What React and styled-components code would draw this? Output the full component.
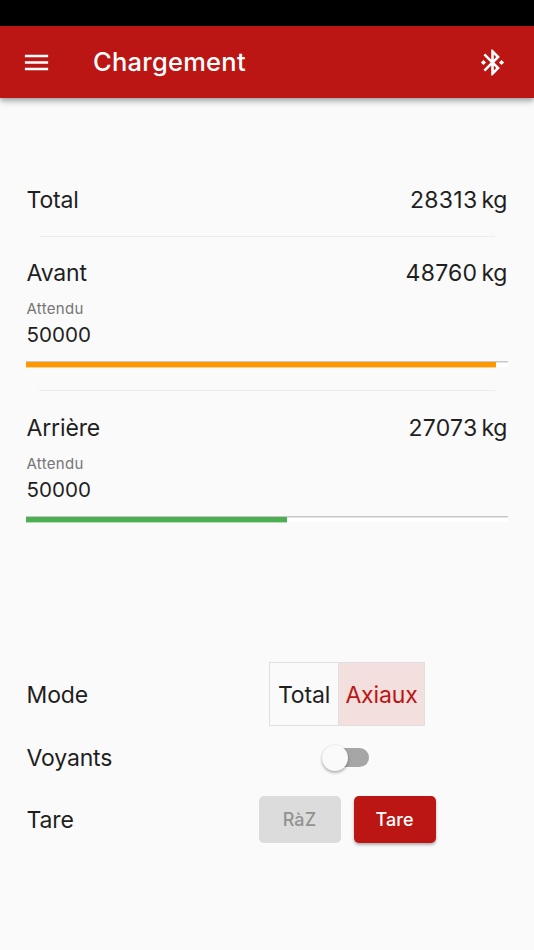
import React, { Component } from "react"
import styled, { createGlobalStyle, css } from "styled-components"

const GlobalStyle = createGlobalStyle`
  * {
    box-sizing: border-box;
  }

  body {
    margin: 0;
    background: #fafafa;
    color: #1f1f1f;
    font-family: Inter, Roboto, "Liberation Sans", sans-serif;
  }

  button {
    margin: 0;
    padding: 0;
    border: none;
    background: none;
    color: inherit;
    font-family: inherit;
  }
`

const Screen = styled.div`
  display: flex;
  flex-direction: column;
  width: 534px;
  height: 950px;
  overflow: hidden;
`

const StatusBar = styled.div`
  flex: none;
  height: 26px;
  background: #000;
`

const AppBar = styled.header`
  flex: none;
  display: flex;
  align-items: center;
  height: 72px;
  padding: 0 26px 0 21px;
  background: #bb1614;
  color: #fff;
  box-shadow: 0 2px 5px rgba(0, 0, 0, 0.32), 0 5px 7px rgba(0, 0, 0, 0.1);
`

const IconButton = styled.button`
  display: flex;
  width: 31px;
  height: 31px;
`

const Icon = styled.svg`
  width: 31px;
  height: 31px;
  fill: currentColor;
`

const Title = styled.h1`
  flex: 1;
  margin: 0 0 0 41px;
  font-size: 25.5px;
  font-weight: 500;
  line-height: 32px;
  letter-spacing: 0.25px;
`

const Main = styled.main`
  display: flex;
  flex-direction: column;
  padding: 65px 26px 0;
`

const Row = styled.div`
  display: flex;
  align-items: center;
  justify-content: space-between;
  height: ${props => props.$height}px;
`

const Label = styled.span`
  padding-left: 0.5px;
  font-size: 23px;
  line-height: 28px;
  letter-spacing: -0.15px;
`

const Weight = styled.span`
  display: flex;
  gap: 4px;
  padding-right: 1px;
  font-size: 23px;
  line-height: 28px;
  letter-spacing: 0.25px;
`

const Unit = styled.span`
  letter-spacing: -0.3px;
`

const Divider = styled.hr`
  width: 456px;
  height: 1px;
  margin: 0 13px;
  border: none;
  background: #ececec;
`

const Axle = styled.section`
  height: 153px;
  padding-top: 10px;

  & ~ & {
    height: 154px;
    padding-top: 11px;
  }
`

const FieldLabel = styled.div`
  padding-left: 0.5px;
  font-size: 15px;
  line-height: 20px;
  letter-spacing: 0.3px;
  color: #757575;
`

const FieldValue = styled.div`
  height: 42px;
  padding-left: 0.5px;
  font-size: 20.6px;
  line-height: 32px;
  letter-spacing: 0;
`

const Gauge = styled.div`
  height: 6px;
  border-top: 1px solid #c6c6c6;
  background: #fff;
  box-shadow: inset 0 1px 0 #e4e4e4;
`

const GaugeFill = styled.div`
  height: 5px;
  background: ${props => props.$color};
  box-shadow: 0 1px 0 ${props => props.$color}66;
`

const Controls = styled.section`
  display: flex;
  flex-direction: column;
  padding-top: 117px;
`

const ControlRow = styled.div`
  display: grid;
  grid-template-columns: 160px 1fr;
  align-items: center;
  height: ${props => props.$height}px;
`

const ControlLabel = styled(Label)`
  padding-top: 1px;
`

const Control = styled.div`
  display: flex;
  justify-content: center;
`

const ModeGroup = styled.div`
  display: flex;
  width: 156px;
  height: 64px;
  border: 1px solid #dddfe0;
`

const ModeButton = styled.button`
  width: ${props => props.$width}px;
  padding-top: 2px;
  font-size: 23px;
  letter-spacing: -0.15px;

  ${props =>
    props.$selected &&
    css`
      border-left: 1px solid #dddfe0;
      background: #f3dfde;
      color: #bb1614;
    `}
`

const Switch = styled.button`
  display: flex;
  align-items: center;
  width: 41px;
  height: 19px;
  margin-right: -3px;
  border-radius: 10px;
  background: #a6a6a6;
`

const Thumb = styled.span`
  flex: none;
  width: 26px;
  height: 26px;
  margin-left: -6px;
  border-radius: 50%;
  background: #fafafa;
  box-shadow: 0 2px 3px rgba(0, 0, 0, 0.28), 0 0 2px rgba(0, 0, 0, 0.12);
`

const Button = styled.button`
  width: 82px;
  height: 47px;
  border-radius: 5px;
  background: #bb1614;
  color: #fff;
  font-size: 18px;
  font-weight: 500;
  letter-spacing: 0.1px;
  box-shadow: 0 2px 3px rgba(0, 0, 0, 0.3);

  & + & {
    margin-left: 13px;
  }

  &:disabled {
    background: #dcdcdc;
    color: #929292;
    box-shadow: none;
  }
`

const axles = [
  { name: "Avant", weight: 48760, expected: 50000, color: "#ff9800" },
  { name: "Arrière", weight: 27073, expected: 50000, color: "#4caf50" },
]

class Header extends Component {
  render() {
    return (
      <AppBar>
        <IconButton aria-label="Menu">
          <Icon viewBox="0 0 24 24">
            <path d="M3 18h18v-2H3v2zm0-5h18v-2H3v2zm0-7v2h18V6H3z" />
          </Icon>
        </IconButton>
        <Title>Chargement</Title>
        <IconButton aria-label="Bluetooth">
          <Icon viewBox="0 0 24 24">
            <path d="M7 12l-2-2-2 2 2 2 2-2zm10.71-4.29L12 2h-1v7.59L6.41 5 5 6.41 10.59 12 5 17.59 6.41 19 11 14.41V22h1l5.71-5.71-4.3-4.29 4.3-4.29zM13 5.83l1.88 1.88L13 9.59V5.83zm1.88 10.46L13 18.17v-3.76l1.88 1.88zM19 10l-2 2 2 2 2-2-2-2z" />
          </Icon>
        </IconButton>
      </AppBar>
    )
  }
}

const Measure = ({ name, weight, height }) => (
  <Row $height={height}>
    <Label>{name}</Label>
    <Weight>
      <span>{weight}</span>
      <Unit>kg</Unit>
    </Weight>
  </Row>
)

const App = () => (
  <>
    <GlobalStyle />
    <Screen>
      <StatusBar />
      <Header />
      <Main>
        <Measure name="Total" weight={28313} height={73} />
        {axles.map(axle => (
          <React.Fragment key={axle.name}>
            <Divider />
            <Axle>
              <Measure name={axle.name} weight={axle.weight} height={52} />
              <FieldLabel>Attendu</FieldLabel>
              <FieldValue>{axle.expected}</FieldValue>
              <Gauge>
                <GaugeFill
                  $color={axle.color}
                  style={{ width: `${(axle.weight / axle.expected) * 100}%` }}
                />
              </Gauge>
            </Axle>
          </React.Fragment>
        ))}
        <Controls>
          <ControlRow $height={64}>
            <ControlLabel>Mode</ControlLabel>
            <Control>
              <ModeGroup>
                <ModeButton $width={68}>Total</ModeButton>
                <ModeButton $width={86} $selected>
                  Axiaux
                </ModeButton>
              </ModeGroup>
            </Control>
          </ControlRow>
          <ControlRow $height={63}>
            <ControlLabel>Voyants</ControlLabel>
            <Control>
              <Switch role="switch" aria-checked="false" aria-label="Voyants">
                <Thumb />
              </Switch>
            </Control>
          </ControlRow>
          <ControlRow $height={61}>
            <ControlLabel>Tare</ControlLabel>
            <Control>
              <Button disabled>RàZ</Button>
              <Button>Tare</Button>
            </Control>
          </ControlRow>
        </Controls>
      </Main>
    </Screen>
  </>
)

export default App
